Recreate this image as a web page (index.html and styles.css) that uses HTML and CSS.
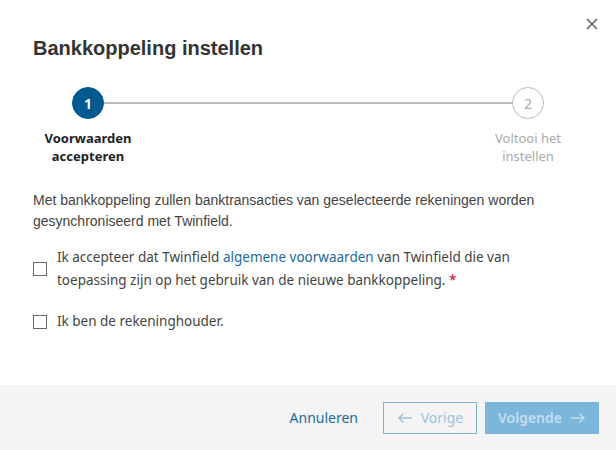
FILE: index.html
```html
<html>
<head>
  <title>Bankkoppeling instellen</title>
  <meta name="viewport" content="width=device-width, initial-scale=1.0">
  <link rel="stylesheet" href="styles.css">
</head>
<body>
  <div class="dialog">
    <button class="close" aria-label="Sluiten">
      <svg width="12" height="12" viewBox="0 0 12 12"><path d="M1 1L11 11M11 1L1 11" stroke="#666" stroke-width="1.6"/></svg>
    </button>

    <div class="content">
      <h2 class="title">Bankkoppeling instellen</h2>

      <div class="stepper">
        <div class="step active">
          <div class="dot">1</div>
          <div class="label">Voorwaarden accepteren</div>
        </div>
        <div class="connector"></div>
        <div class="step">
          <div class="dot">2</div>
          <div class="label">Voltooi het instellen</div>
        </div>
      </div>

      <p class="intro">Met bankkoppeling zullen banktransacties van geselecteerde rekeningen worden gesynchroniseerd met Twinfield.</p>

      <label class="check">
        <span class="box"></span>
        <span class="text">Ik accepteer dat Twinfield <a href="#">algemene voorwaarden</a> van Twinfield die van toepassing zijn op het gebruik van de nieuwe bankkoppeling. <span class="req">*</span></span>
      </label>

      <label class="check">
        <span class="box"></span>
        <span class="text">Ik ben de rekeninghouder.</span>
      </label>
    </div>

    <div class="footer">
      <a class="cancel" href="#">Annuleren</a>
      <button class="btn prev">
        <svg width="16" height="12" viewBox="0 0 16 12"><path d="M15 6H2M6.5 1.5L2 6l4.5 4.5" fill="none" stroke="currentColor" stroke-width="1.4"/></svg>
        Vorige
      </button>
      <button class="btn next">
        Volgende
        <svg width="16" height="12" viewBox="0 0 16 12"><path d="M1 6h13M9.5 1.5L14 6l-4.5 4.5" fill="none" stroke="currentColor" stroke-width="1.4"/></svg>
      </button>
    </div>
  </div>
</body>
</html>
```

FILE: styles.css
```css
body {
  margin: 0;
  background: #fff;
  font-family: "Liberation Sans", Arial, sans-serif;
}

.dialog {
  position: relative;
  width: 616px;
  height: 450px;
  display: flex;
  flex-direction: column;
}

.close {
  position: absolute;
  top: 14px;
  right: 14px;
  width: 20px;
  height: 20px;
  padding: 0;
  border: 0;
  background: none;
  display: flex;
  align-items: center;
  justify-content: center;
}

.content {
  flex: 1;
  padding: 36px 33px 0;
}

.title {
  margin: 0;
  font-size: 20px;
  line-height: 24px;
  font-weight: bold;
  color: #333;
}

.stepper {
  display: flex;
  padding: 0 10px;
  margin-top: 27px;
}

.step {
  width: 90px;
  display: flex;
  flex-direction: column;
  align-items: center;
  font-family: "Noto Sans", sans-serif;
}

.dot {
  width: 30px;
  height: 30px;
  border-radius: 50%;
  border: 1px solid #bbb;
  background: #fff;
  color: #aaa;
  font-size: 14px;
  display: flex;
  align-items: center;
  justify-content: center;
}

.step.active .dot {
  background: #005a8f;
  border-color: #005a8f;
  color: #fff;
  font-weight: bold;
}

.label {
  margin-top: 10px;
  text-align: center;
  font-size: 13px;
  line-height: 18px;
  color: #aaa;
}

.step.active .label {
  color: #222;
  font-weight: bold;
}

.connector {
  flex: 1;
  height: 2px;
  background: #bbb;
  margin: 15px -29px 0;
}

.intro {
  margin: 25px 0 0;
  font-size: 14px;
  line-height: 21px;
  color: #444;
}

.check {
  display: flex;
  align-items: center;
  gap: 10px;
  margin-top: 14px;
  font-family: "Noto Sans", sans-serif;
  font-size: 13.5px;
  line-height: 23px;
  color: #444;
}

.check + .check {
  margin-top: 18px;
}

.check .text {
  max-width: 470px;
}

.box {
  flex: none;
  width: 12px;
  height: 12px;
  border: 1px solid #666;
  background: #fff;
}

.check a {
  color: #1b6aa0;
  text-decoration: none;
}

.req {
  color: #d0021b;
}

.footer {
  height: 65px;
  background: #f4f4f4;
  display: flex;
  align-items: center;
  justify-content: flex-end;
  padding: 0 17px;
  font-family: "Noto Sans", sans-serif;
}

.cancel {
  color: #1b6aa0;
  text-decoration: none;
  font-size: 14px;
  margin-right: 25px;
}

.btn {
  height: 32px;
  display: flex;
  align-items: center;
  justify-content: center;
  gap: 8px;
  font-family: "Noto Sans", sans-serif;
  font-size: 14px;
  padding: 0;
}

.prev {
  width: 94px;
  border: 1px solid #7fb1d3;
  background: transparent;
  color: #9dc1dc;
  margin-right: 8px;
}

.next {
  width: 114px;
  border: 0;
  background: #7db6db;
  color: #c3dff0;
  font-weight: 600;
}
```
